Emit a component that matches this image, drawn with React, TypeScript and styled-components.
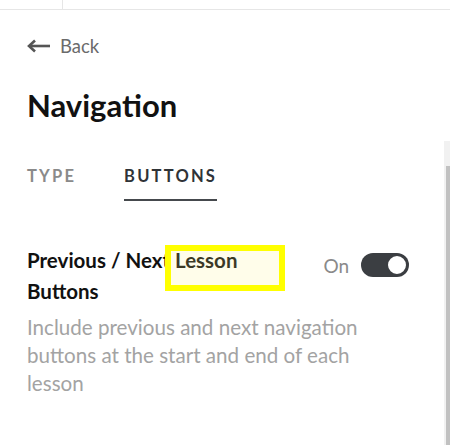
import styled, { createGlobalStyle } from "styled-components";

const GlobalStyle = createGlobalStyle`
  html, body {
    margin: 0;
    padding: 0;
    background: #ffffff;
    font-family: Lato, "Open Sans", sans-serif;
  }
`;

const Page = styled.div`
  width: 450px;
  height: 445px;
  display: flex;
  flex-direction: column;
  overflow: hidden;
  background: #ffffff;
`;

const TopBar = styled.div`
  height: 9px;
  display: flex;
  border-bottom: 1px solid #e6e6e6;
  flex-shrink: 0;
`;

const TopCell = styled.div`
  width: 62px;
  border-right: 1px solid #e6e6e6;
`;

const Body = styled.div`
  flex: 1;
  display: flex;
`;

const Content = styled.div`
  flex: 1;
  min-width: 0;
  padding: 25px 0 0 27px;
  display: flex;
  flex-direction: column;
`;

const Rail = styled.div`
  width: 6px;
  margin-top: 131px;
  padding-top: 25px;
  background: #f1f1f1;
  display: flex;
  flex-direction: column;
`;

const Thumb = styled.div`
  flex: 1;
  margin-left: 2px;
  background: #c1c1c1;
`;

const BackLink = styled.a`
  display: flex;
  align-items: center;
  gap: 9px;
  font-size: 18.5px;
  line-height: 22px;
  color: #6b6b6b;
  text-decoration: none;
  cursor: pointer;
`;

const Title = styled.h1`
  margin: 30px 0 0;
  font-size: 31px;
  line-height: 36px;
  font-weight: 700;
  color: #111111;
`;

const Tabs = styled.div`
  margin-top: 43px;
  display: flex;
  gap: 48px;
`;

const Tab = styled.div<{ $active?: boolean }>`
  font-size: 16.5px;
  line-height: 20px;
  font-weight: 700;
  letter-spacing: 2.2px;
  padding-bottom: 13px;
  color: ${(p) => (p.$active ? "#2f3337" : "#8a8a8a")};
  border-bottom: 2px solid ${(p) => (p.$active ? "#45494d" : "transparent")};
`;

const Setting = styled.div`
  margin-top: 44px;
  display: flex;
  flex-direction: column;
`;

const SettingHeader = styled.div`
  display: flex;
  align-items: flex-start;
  justify-content: space-between;
  padding-right: 35px;
`;

const SettingTitle = styled.div`
  position: relative;
  font-size: 20.5px;
  line-height: 31px;
  font-weight: 700;
  color: #111111;
`;

const Highlight = styled.span`
  position: absolute;
  left: 138px;
  top: 0;
  width: 120px;
  height: 46px;
  box-sizing: border-box;
  border: 6px solid #ffff00;
  background: rgba(255, 244, 140, 0.18);
  pointer-events: none;
`;

const Description = styled.p`
  margin: 6px 0 0;
  max-width: 350px;
  font-size: 20.6px;
  line-height: 28px;
  color: #a3a3a3;
`;

const ToggleWrap = styled.div`
  display: flex;
  align-items: center;
  gap: 12px;
  margin-top: 8px;
  flex-shrink: 0;
`;

const ToggleLabel = styled.span`
  font-size: 19px;
  color: #8a8a8a;
`;

const Switch = styled.div<{ $on: boolean }>`
  width: 48px;
  height: 24px;
  border-radius: 12px;
  background: ${(p) => (p.$on ? "#3b3e42" : "#cccccc")};
  display: flex;
  align-items: center;
  justify-content: ${(p) => (p.$on ? "flex-end" : "flex-start")};
  padding: 0 1px;
  box-sizing: border-box;
`;

const Knob = styled.div`
  width: 22px;
  height: 22px;
  border-radius: 50%;
  background: #ffffff;
  border: 2px solid #3b3e42;
  box-sizing: border-box;
`;

const ArrowIcon = () => (
  <svg width="24" height="14" viewBox="0 0 24 14" fill="none">
    <path d="M23 7H3" stroke="#555" strokeWidth="2.6" />
    <path d="M8 1.5L2 7l6 5.5" stroke="#555" strokeWidth="2.6" />
  </svg>
);

export default function App() {
  return (
    <Page>
      <GlobalStyle />
      <TopBar>
        <TopCell />
      </TopBar>
      <Body>
        <Content>
          <BackLink>
            <ArrowIcon />
            Back
          </BackLink>
          <Title>Navigation</Title>
          <Tabs>
            <Tab>TYPE</Tab>
            <Tab $active>BUTTONS</Tab>
          </Tabs>
          <Setting>
            <SettingHeader>
              <SettingTitle>
                Previous / Next Lesson
                <br />
                Buttons
                <Highlight />
              </SettingTitle>
              <ToggleWrap>
                <ToggleLabel>On</ToggleLabel>
                <Switch $on>
                  <Knob />
                </Switch>
              </ToggleWrap>
            </SettingHeader>
            <Description>
              Include previous and next navigation buttons at the start and end
              of each lesson
            </Description>
          </Setting>
        </Content>
        <Rail>
          <Thumb />
        </Rail>
      </Body>
    </Page>
  );
}
